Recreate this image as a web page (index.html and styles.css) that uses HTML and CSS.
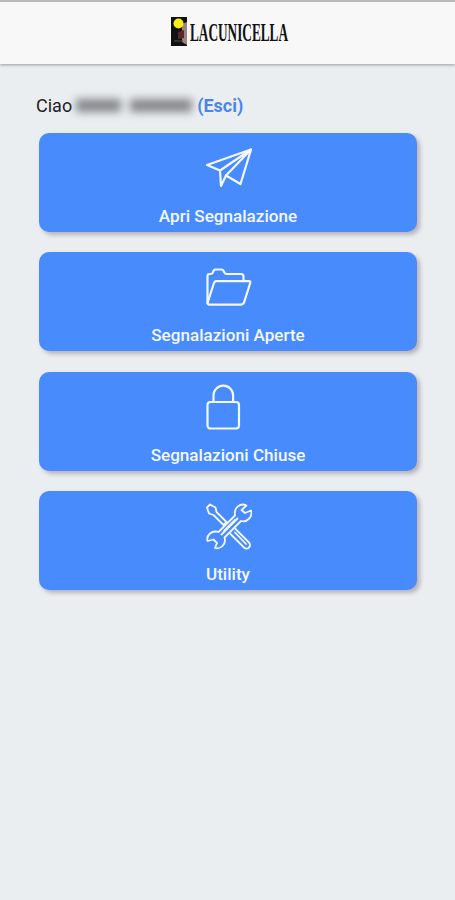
FILE: index.html
```html
<!DOCTYPE html>
<html lang="it">
<head>
    <meta charset="UTF-8">
    <meta name="viewport" content="width=device-width, initial-scale=1.0">
    <title>Lacunicella</title>
    <link rel="stylesheet" href="styles.css">
</head>
<body>

<header class="barra">
    <svg class="logo" width="17" height="30" viewBox="0 0 17 30">
        <rect width="16" height="29" fill="#111"/>
        <path d="M11 7l5-2v23l-5-3z" fill="#9b8579"/>
        <path d="M7 15l6-2v8l-6 1z" fill="#5b2630"/>
        <path d="M3 24h9" stroke="#555"/>
        <circle cx="7.5" cy="6.500" r="5" fill="#f6ee1b"/>
    </svg>
    <svg class="marchio" width="104" height="36" viewBox="0 0 104 36">
        <text x="1" y="27" textLength="98" lengthAdjust="spacingAndGlyphs">LACUNICELLA</text>
    </svg>
</header>

<main class="contenuto">
    <p class="saluto">Ciao <span class="nome"><i class="n1"></i><i class="n2"></i></span> <a class="esci" href="#">(Esci)</a></p>

    <nav class="menu">
        <a class="card" href="#">
            <svg class="icona" viewBox="0 0 48 48">
                <path d="M47 5.500L3 21l13 5.500L17 42l5-10.500L36.500 40z"/>
                <path d="M16 26.500L47 5.500L22 31.500"/>
            </svg>
            <span>Apri Segnalazione</span>
        </a>
        <a class="card" href="#">
            <svg class="icona" viewBox="0 0 48 48">
                <path d="M3.500 40V13q0-2 2-2h1.500q1.500 0 2-2l.5-1q.5-1.500 2-1.500h6q1.500 0 2.200 1.500l.6 1.300q.7 1.700 2.500 1.700H37q2.500 0 2.500 2.500v4"/>
                <path d="M12.500 18.200H45q1.800 0 1.200 1.800l-6 19q-.8 2.700-3.700 2.700H5.500q-2.500 0-1.700-2.700l6-18.500q.7-2.300 2.700-2.300z"/>
            </svg>
            <span>Segnalazioni Aperte</span>
        </a>
        <a class="card" href="#">
            <svg class="icona" viewBox="0 0 48 48">
                <rect x="3.500" y="19" width="31.500" height="26.500" rx="3"/>
                <path d="M9.500 19v-6.500a9.800 9.800 0 0 1 19.600 0V19"/>
            </svg>
            <span>Segnalazioni Chiuse</span>
        </a>
        <a class="card" href="#">
            <svg class="icona sottile" viewBox="0 0 48 48">
                <path d="M3 5.500L6 2.500l5.500 3 1 4.500L22.500 20l-3 3L9.500 13 5 11.500z"/>
                <path d="M31.500 27L45 40.500a3.500 3.500 0 0 1-5 5L26.500 32"/>
                <path d="M31 30.500L42 42"/>
                <path d="M42.500 3.500c-6-3-13 2-11.500 10L14.500 30C8 28 2 33 3.500 39l6-1.500 3.500 3.500-2 5c6 1.500 11.500-4 9.500-10.500L37 19c6 1.500 12-4 10-10.500l-6 2.500-3.500-3z"/>
                <path d="M17.500 32.500l16-16M20 29l11-11"/>
            </svg>
            <span>Utility</span>
        </a>
    </nav>
</main>

</body>
</html>
```
FILE: styles.css
```css
body{
    margin: 0;
    min-height: 900px;
    background-color: #eaeef1;
    font-family: Roboto, "Liberation Sans", sans-serif;
    color: #222;
}
.barra{
    box-sizing: border-box;
    height: 64px;
    padding: 0 0 2px 9px;
    display: flex;
    justify-content: center;
    align-items: center;
    gap: 1px;
    border-top: 2px solid #b9b9b9;
    background-color: #f8f8f8;
    box-shadow: 0 1px 3px rgba(0,0,0,.35);
}
.logo{
    display: block;
}
.marchio{
    display: block;
    overflow: visible;
}
.marchio text{
    font-family: "Liberation Serif", serif;
    font-size: 25px;
    font-weight: bold;
    fill: #111;
}
.contenuto{
    padding: 31px 38px 0 39px;
}
.saluto{
    display: flex;
    align-items: center;
    height: 21px;
    margin: 0 0 16.5px -3px;
    font-size: 18px;
}
.nome{
    display: flex;
    gap: 9px;
    margin: 0 5px 0 4px;
    filter: blur(4px);
}
.nome i{
    height: 13px;
    background-color: #858789;
}
.n1{
    width: 45px;
}
.n2{
    width: 62px;
}
.esci{
    color: #4a86e8;
    font-weight: bold;
    text-decoration: none;
}
.menu{
    display: grid;
    gap: 20.5px;
}
.card{
    box-sizing: border-box;
    height: 99px;
    padding-top: 11px;
    display: flex;
    flex-direction: column;
    align-items: center;
    gap: 14px;
    border-radius: 10px;
    background-color: #488bfc;
    box-shadow: 3px 3px 4px rgba(90,70,90,.35);
    color: #f4f8ff;
    font-size: 17.1px;
    font-weight: 500;
    line-height: 20px;
    text-decoration: none;
}
.icona{
    flex: none;
    width: 48px;
    height: 48px;
    fill: none;
    stroke: #f4f8ff;
    stroke-width: 2.2;
    stroke-linejoin: round;
    stroke-linecap: round;
}
.sottile{
    stroke-width: 1.8;
}
```
